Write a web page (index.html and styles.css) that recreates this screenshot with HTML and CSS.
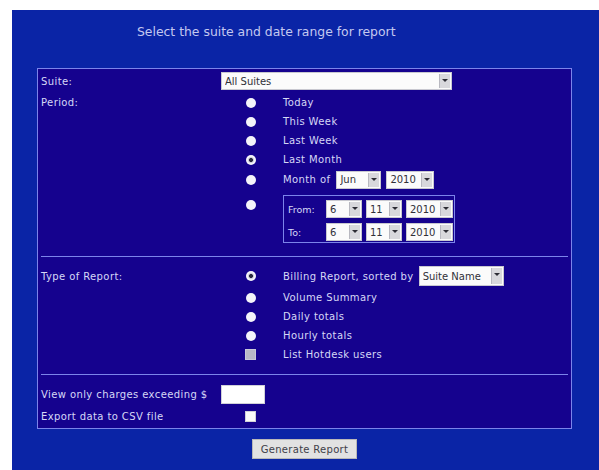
FILE: index.html
```html
<!DOCTYPE html>
<html lang="en">
<head>
<meta charset="utf-8">
<title>Report</title>
<link rel="stylesheet" href="styles.css">
</head>
<body>
<div class="page">
  <h1 class="title">Select the suite and date range for report</h1>
  <form class="report">
    <div class="sec sec-period">
      <label class="lbl r1">Suite:</label>
      <span class="sel sel-suite r1"><select><option>All Suites</option></select></span>

      <span class="lbl r2">Period:</span>
      <span class="opt r2"><input type="radio" name="p"></span><span class="txt r2">Today</span>
      <span class="opt r3"><input type="radio" name="p"></span><span class="txt r3">This Week</span>
      <span class="opt r4"><input type="radio" name="p"></span><span class="txt r4">Last Week</span>
      <span class="opt r5"><input type="radio" name="p" checked></span><span class="txt r5">Last Month</span>
      <span class="opt r6"><input type="radio" name="p"></span>
      <span class="txt r6">Month of
        <span class="sel sel-mon"><select><option>Jun</option></select></span>
        <span class="sel sel-year"><select><option>2010</option></select></span>
      </span>
      <span class="opt opt-top r7"><input type="radio" name="p"></span>
      <div class="range r7">
        <span class="range-lbl">From:</span>
        <span class="sel sel-d"><select><option>6</option></select></span>
        <span class="sel sel-d"><select><option>11</option></select></span>
        <span class="sel sel-y"><select><option>2010</option></select></span>
        <span class="range-lbl">To:</span>
        <span class="sel sel-d"><select><option>6</option></select></span>
        <span class="sel sel-d"><select><option>11</option></select></span>
        <span class="sel sel-y"><select><option>2010</option></select></span>
      </div>
    </div>

    <div class="sec sec-type">
      <span class="lbl r1">Type of Report:</span>
      <span class="opt r1"><input type="radio" name="t" checked></span>
      <span class="txt r1">Billing Report, sorted by
        <span class="sel sel-sort"><select><option>Suite Name</option></select></span>
      </span>
      <span class="opt r2"><input type="radio" name="t"></span><span class="txt r2">Volume Summary</span>
      <span class="opt r3"><input type="radio" name="t"></span><span class="txt r3">Daily totals</span>
      <span class="opt r4"><input type="radio" name="t"></span><span class="txt r4">Hourly totals</span>
      <span class="opt r5"><input type="checkbox" class="chk chk-off" disabled></span><span class="txt r5">List Hotdesk users</span>
    </div>

    <div class="sec sec-extra">
      <span class="lbl r1">View only charges exceeding $</span>
      <span class="amount r1"><input type="text" class="amt"></span>
      <span class="lbl r2">Export data to CSV file</span>
      <span class="opt r2"><input type="checkbox" class="chk"></span>
    </div>
  </form>
  <div class="actions"><button type="button" class="btn">Generate Report</button></div>
</div>
</body>
</html>
```

FILE: styles.css
```css
html, body {
  margin: 0;
  padding: 0;
  background: #ffffff;
}

.page {
  margin: 10px 0 0 12px;
  height: 460px;
  background: #0a24a6;
  font-family: "DejaVu Sans", Verdana, sans-serif;
  color: #d6d8f6;
  overflow: hidden;
}

.title {
  box-sizing: border-box;
  height: 58px;
  margin: 0;
  padding: 14px 0 0 125px;
  font-size: 12.4px;
  line-height: 16px;
  font-weight: normal;
  color: #c4c8f0;
}

.report {
  box-sizing: border-box;
  width: 535px;
  margin-left: 25px;
  border: 1px solid #7c84ea;
  background: #15028e;
  font-size: 10px;
  letter-spacing: 0.4px;
}

/* three columns: caption, option control, option text */
.sec {
  display: grid;
  grid-template-columns: 180px 65px 1fr;
  align-items: center;
}

.sec + .sec {
  border-top: 1px solid #7c84ea;
  margin: 0 3px;
  grid-template-columns: 177px 65px 1fr;
}
.sec + .sec .lbl { padding-left: 0; }

.sec-period {
  grid-template-rows: 24px 19px 19px 19px 19px 21px 53px;
  padding-bottom: 13px;
}
.sec-type {
  grid-template-rows: 24px 19px 19px 19px 19px;
  padding: 7px 0 10px;
}
.sec-extra {
  grid-template-rows: 21px 23px;
  padding-top: 9px;
}

.r1 { grid-row: 1; }
.r2 { grid-row: 2; }
.r3 { grid-row: 3; }
.r4 { grid-row: 4; }
.r5 { grid-row: 5; }
.r6 { grid-row: 6; }
.r7 { grid-row: 7; }

.lbl {
  grid-column: 1;
  padding-left: 3px;
  white-space: nowrap;
}
.opt {
  grid-column: 2;
  display: flex;
  justify-content: center;
}
.opt-top {
  align-self: start;
  padding-top: 10px;
}
.txt {
  grid-column: 3;
  display: flex;
  align-items: center;
  gap: 5px;
  white-space: nowrap;
}

/* radios: plain white dots, the checked one carries a dark centre */
input[type="radio"] {
  appearance: none;
  margin: 0;
  width: 10px;
  height: 10px;
  border-radius: 50%;
  background: #f4f4fa;
}
input[type="radio"]:checked {
  background: radial-gradient(circle, #2a2a40 0 1.6px, #c8c8d4 2.3px, #f4f4fa 3.6px);
}

.chk {
  appearance: none;
  margin: 0;
  width: 11px;
  height: 11px;
  background: #fafafa;
  border: 1px solid #d0d0d8;
  box-sizing: border-box;
}
.chk-off {
  background: #b8b8c8;
  border-color: #c8c8d8;
}

/* dropdowns drawn as a white field with a grey arrow button */
.sel {
  position: relative;
  display: inline-block;
  height: 18px;
  background: #fbfbfb;
  border: 1px solid #c8c8d0;
  box-sizing: border-box;
  letter-spacing: 0;
}
.sel select {
  appearance: none;
  width: 100%;
  height: 100%;
  margin: 0;
  padding: 0 0 0 3px;
  border: 0;
  background: transparent;
  font: 10px "DejaVu Sans", Verdana, sans-serif;
  color: #303038;
}
.sel::after {
  content: "";
  position: absolute;
  top: 1px;
  right: 1px;
  bottom: 1px;
  width: 10px;
  background: #d8d8dc;
  border-left: 1px solid #b8b8c0;
}
.sel::before {
  content: "";
  position: absolute;
  z-index: 1;
  right: 3px;
  top: 6px;
  border-left: 3px solid transparent;
  border-right: 3px solid transparent;
  border-top: 3px solid #2c2c34;
}

.sel-suite {
  grid-column: 2 / 4;
  justify-self: start;
  margin-left: 3px;
  width: 231px;
}
.sel-mon { width: 45px; margin-left: 1px; }
.sel-year { width: 48px; }
.sel-sort { width: 85px; height: 20px; }
.sel-d { width: 36px; }
.sel-y { width: 47px; }

.range {
  grid-column: 3;
  align-self: start;
  justify-self: start;
  margin-top: 5px;
  box-sizing: border-box;
  width: 172px;
  height: 48px;
  border: 1px solid #7c84ea;
  padding: 4px 4px 0 4px;
  display: grid;
  grid-template-columns: 34px 36px 36px 47px;
  grid-auto-rows: 18px;
  row-gap: 5px;
  column-gap: 4px;
  align-items: center;
}
.range-lbl { letter-spacing: 0; font-size: 9.5px; }

.amount {
  grid-column: 2;
  padding-left: 3px;
}
.amt {
  display: block;
  box-sizing: border-box;
  width: 44px;
  height: 19px;
  margin: 0;
  border: 1px solid #d0d0d8;
  background: #ffffff;
}

.actions {
  display: flex;
  padding: 10px 0 0 240px;
}
.btn {
  box-sizing: border-box;
  width: 105px;
  height: 20px;
  padding: 0;
  background: #e2e2e2;
  border: 1px solid #b8b8b8;
  border-radius: 0;
  font: 10px "DejaVu Sans", Verdana, sans-serif;
  letter-spacing: 0.3px;
  color: #404048;
}
```
